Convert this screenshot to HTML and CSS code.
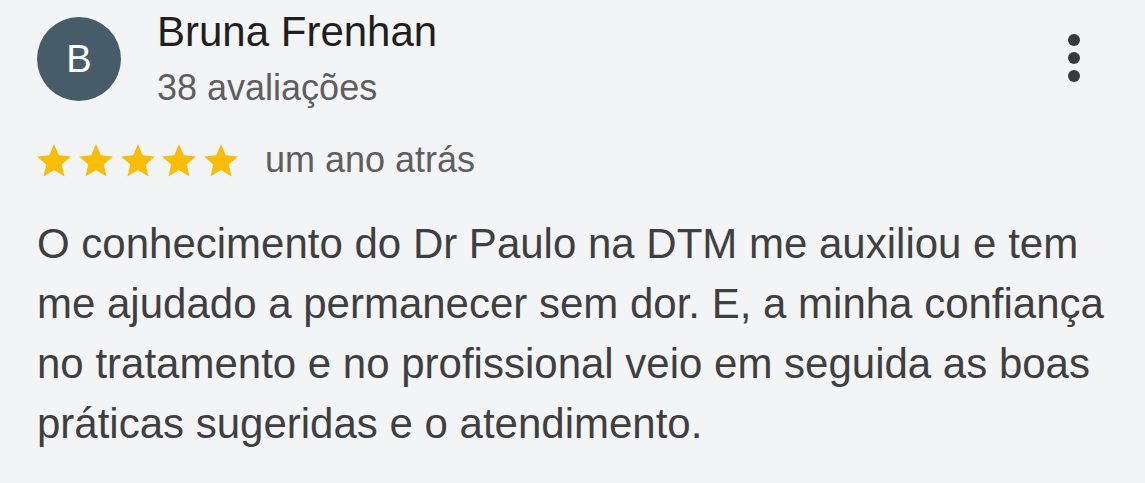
FILE: index.html
```html
<!DOCTYPE html>
<html lang="pt">
<head>
<meta charset="utf-8">
<link rel="stylesheet" href="styles.css">
</head>
<body>
<div class="review">
  <div class="header">
    <div class="avatar">B</div>
    <div class="who">
      <div class="name">Bruna Frenhan</div>
      <div class="count">38 avaliações</div>
    </div>
    <div class="more" aria-label="Mais opções">
      <span class="dot"></span><span class="dot"></span><span class="dot"></span>
    </div>
  </div>
  <div class="meta">
    <div class="stars">
      <svg viewBox="2 2 20 19.3"><path d="M12 17.27L18.18 21l-1.64-7.03L22 9.24l-7.19-.61L12 2 9.19 8.63 2 9.24l5.46 4.73L5.82 21z"/></svg>
      <svg viewBox="2 2 20 19.3"><path d="M12 17.27L18.18 21l-1.64-7.03L22 9.24l-7.19-.61L12 2 9.19 8.63 2 9.24l5.46 4.73L5.82 21z"/></svg>
      <svg viewBox="2 2 20 19.3"><path d="M12 17.27L18.18 21l-1.64-7.03L22 9.24l-7.19-.61L12 2 9.19 8.63 2 9.24l5.46 4.73L5.82 21z"/></svg>
      <svg viewBox="2 2 20 19.3"><path d="M12 17.27L18.18 21l-1.64-7.03L22 9.24l-7.19-.61L12 2 9.19 8.63 2 9.24l5.46 4.73L5.82 21z"/></svg>
      <svg viewBox="2 2 20 19.3"><path d="M12 17.27L18.18 21l-1.64-7.03L22 9.24l-7.19-.61L12 2 9.19 8.63 2 9.24l5.46 4.73L5.82 21z"/></svg>
    </div>
    <span class="when">um ano atrás</span>
  </div>
  <p class="text">O conhecimento do Dr Paulo na DTM me auxiliou e tem<br>me ajudado a permanecer sem dor. E, a minha confiança<br>no tratamento e no profissional veio em seguida as boas<br>práticas sugeridas e o atendimento.</p>
</div>
</body>
</html>
```

FILE: styles.css
```css
html, body {
  margin: 0;
  padding: 0;
  background: #f3f4f6;
}
body {
  font-family: "Liberation Sans", Arial, sans-serif;
  width: 1145px;
  height: 483px;
  overflow: hidden;
}
.review {
  padding: 17px 0 0 37px;
}
.header {
  display: flex;
  align-items: flex-start;
}
.avatar {
  width: 84px;
  height: 84px;
  border-radius: 50%;
  background: #475c69;
  color: #fff;
  font-size: 38px;
  display: flex;
  align-items: center;
  justify-content: center;
  flex: none;
}
.who {
  margin-left: 36px;
  flex: 1;
}
.name {
  font-size: 42px;
  line-height: 42px;
  color: #1f1f1f;
  margin-top: -6px;
}
.count {
  font-size: 36px;
  line-height: 40px;
  color: #5e5e60;
  margin-top: 15px;
}
.more {
  display: flex;
  flex-direction: column;
  gap: 6px;
  margin: 17px 65px 0 0;
}
.dot {
  width: 12px;
  height: 12px;
  border-radius: 50%;
  background: #3a3a3c;
}
.meta {
  display: flex;
  align-items: center;
  margin-top: 31px;
}
.stars {
  display: flex;
  gap: 7.75px;
}
.stars svg {
  width: 34px;
  height: 33px;
  fill: #fbbc04;
}
.when {
  margin-left: 27px;
  font-size: 36px;
  color: #5e5e60;
}
.text {
  margin: 33px 0 0 0;
  font-size: 42px;
  line-height: 60px;
  color: #3f3f42;
}
```
